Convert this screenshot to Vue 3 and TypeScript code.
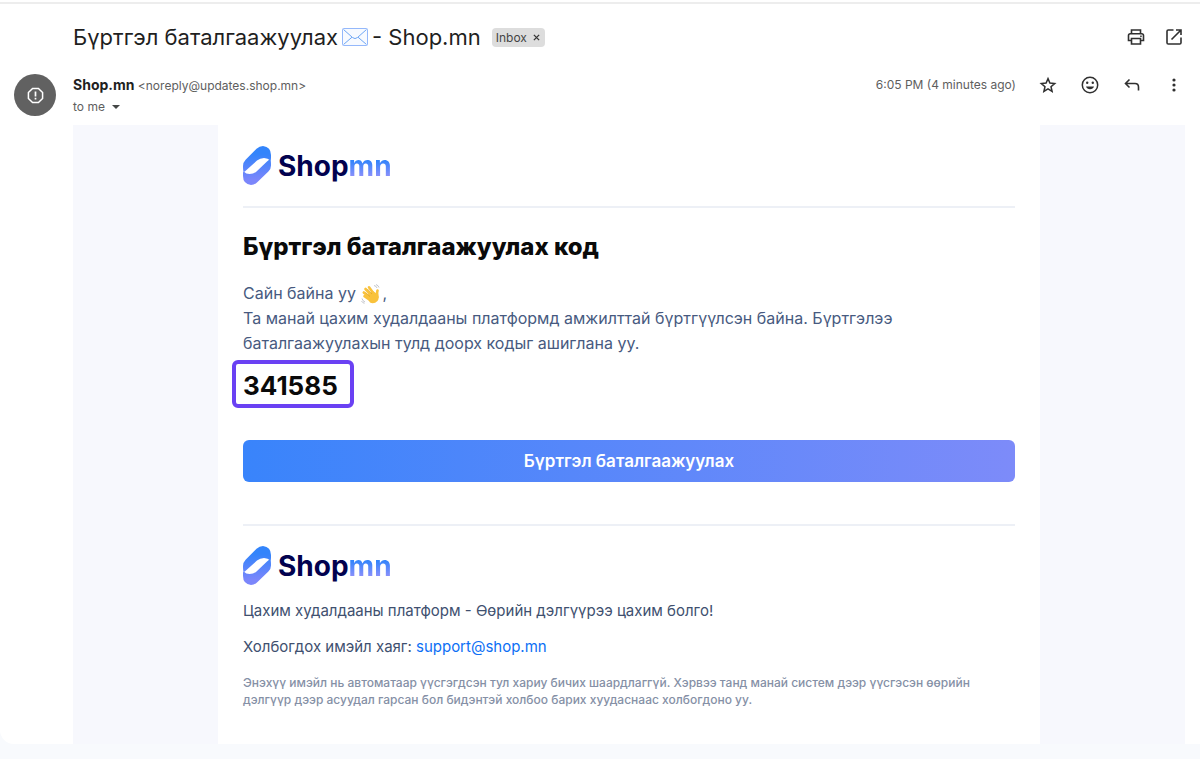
<script setup lang="ts">
const subjectStart = 'Бүртгэл баталгаажуулах'
const subjectEnd = '- Shop.mn'
const code = '341585'
</script>

<template>
  <div class="page">
    <main class="message">
      <header class="subject-row">
        <h1 class="subject">
          <span>{{ subjectStart }}</span>
          <svg class="envelope" viewBox="0 0 26 18" role="img" aria-label="✉️">
            <rect x="0.5" y="0.5" width="25" height="17" rx="1" fill="#f7faff" stroke="#94b8fb" />
            <path d="M1.500 1.500 10.500 9.500Q13 11.700 15.500 9.500L24.500 1.500M1.500 16.500 10 9.200M24.500 16.500 16 9.200" fill="none" stroke="#6ea6f5" />
          </svg>
          <span>{{ subjectEnd }}</span>
        </h1>
        <div class="label">
          <span>Inbox</span>
          <button type="button" class="label-remove" aria-label="Remove label">
            <svg viewBox="0 0 8 8"><path d="M1 1 7 7M7 1 1 7" fill="none" stroke="#333" stroke-width="1.500" /></svg>
          </button>
        </div>
        <div class="subject-tools">
          <button type="button" class="icon" aria-label="Print">
            <svg viewBox="0 0 20 20" fill="none" stroke="#303030" stroke-width="1.600">
              <path d="M5.500 6.500V3h9v3.500M5.500 13.500H2.500V8.500Q2.500 6.700 4.300 6.700H15.700Q17.500 6.700 17.500 8.500V13.500H14.500M5.500 11.500h9V17h-9Z" />
              <path d="M14.200 9.300h1.500" />
            </svg>
          </button>
          <button type="button" class="icon" aria-label="Open in new window">
            <svg viewBox="0 0 20 20" fill="none" stroke="#303030" stroke-width="1.600">
              <path d="M9.500 3H4.300Q3 3 3 4.300V15.700Q3 17 4.300 17H15.700Q17 17 17 15.700V10.500M12 3H17V8M17 3 7.500 12.500" />
            </svg>
          </button>
        </div>
      </header>

      <section class="sender-row">
        <div class="avatar">
          <svg viewBox="0 0 18 18" fill="none" stroke="#fff" stroke-width="1.600">
            <path d="M5.900 1.500h6.200L16.500 5.900v6.200L12.100 16.500H5.900L1.500 12.100V5.900Z" />
            <path d="M9 4.800V10M9 11.400V13.200" stroke-width="1.800" />
          </svg>
        </div>
        <div class="sender">
          <p class="from"><strong>Shop.mn</strong> <span>&lt;noreply@updates.shop.mn&gt;</span></p>
          <button type="button" class="to">
            to me
            <svg viewBox="0 0 8 4"><path d="M0 0h8L4 4Z" fill="#444746" /></svg>
          </button>
        </div>
        <time class="time">6:05 PM (4 minutes ago)</time>
        <div class="actions">
          <button type="button" class="icon" aria-label="Star">
            <svg viewBox="0 0 20 20" fill="none" stroke="#303030" stroke-width="1.500">
              <path d="M10 3.600 11.900 8.100 16.700 8.500 13 11.700 14.100 16.400 10 13.900 5.900 16.400 7 11.700 3.300 8.500 8.100 8.100Z" />
            </svg>
          </button>
          <button type="button" class="icon" aria-label="Add reaction">
            <svg viewBox="0 0 20 20">
              <circle cx="10" cy="10" r="7.700" fill="none" stroke="#303030" stroke-width="1.500" />
              <circle cx="7.200" cy="7.800" r="1.200" fill="#303030" />
              <circle cx="12.800" cy="7.800" r="1.200" fill="#303030" />
              <path d="M6 11.500H14Q13 14.300 10 14.300T6 11.500Z" fill="#303030" />
            </svg>
          </button>
          <button type="button" class="icon" aria-label="Reply">
            <svg viewBox="0 0 20 20" fill="none" stroke="#303030" stroke-width="1.600">
              <path d="M7.500 4.500 3.500 8.500 7.500 12.500M3.500 8.500H13Q16.500 8.500 16.500 12V15.500" />
            </svg>
          </button>
          <button type="button" class="icon" aria-label="More">
            <svg viewBox="0 0 20 20" fill="#303030">
              <circle cx="10" cy="5" r="1.600" /><circle cx="10" cy="10" r="1.600" /><circle cx="10" cy="15" r="1.600" />
            </svg>
          </button>
        </div>
      </section>

      <div class="canvas">
        <article class="mail">
          <div class="brand">
            <svg class="mark" viewBox="0 0 28 39" aria-hidden="true">
              <defs>
                <linearGradient id="mark-fill" gradientUnits="userSpaceOnUse" x1="0" y1="8" x2="0" y2="34">
                  <stop offset="0" stop-color="#3384fb" /><stop offset="1" stop-color="#7b86fb" />
                </linearGradient>
              </defs>
              <g fill="url(#mark-fill)">
                <path d="M.7 26Q0 25 0 20Q0 16.500 2.600 13.800L13.500 2.800Q16.500 0 20 0Q28 1 28 9V12Q28 14 27.300 14.500Q25 12 21 12Q17 12 14 14.500L3.500 24Q1.500 26 .7 26Z" />
                <path d="M27.300 13.500Q28 14 28 19.500Q28 23 25.400 25.600L14.500 36Q11.500 39 8 39Q0 38 0 30V27Q0 25.500 .7 25.500Q3 28 6.500 28Q10.500 28 13.500 25.500L24 15.500Q26 13.500 27.300 13.500Z" />
              </g>
            </svg>
            <span class="wordmark">Shop<span>mn</span></span>
          </div>
          <hr />
          <h2>Бүртгэл баталгаажуулах код</h2>
          <p class="body">
            Сайн байна уу
            <svg class="wave" viewBox="0 0 20 20" role="img" aria-label="👋">
              <g fill="none" stroke="#f9c23c" stroke-width="2.600" stroke-linecap="round">
                <path d="M4.500 5 11 12M8 3.300 13 10M2.800 8.500 9 14M3.500 12.200 9 16M16.500 6.500Q15.500 9 16.500 13" />
              </g>
              <path d="M5 12 12 7 16 10Q19 14 16.500 17Q13 20.500 9 18.500Z" fill="#f9c23c" />
              <path d="M6.500 5 11 10M4.500 8.500 9 12.500" stroke="#d99a20" stroke-width=".6" fill="none" />
              <path d="M13 1.500Q15.500 2 16 4M15 .5Q17.500 1.500 18 3.500M1 14.500Q1.500 17 4 18M.5 17Q1.500 19 3.500 19.300" fill="none" stroke="#c3c5cc" stroke-width="1" />
            </svg>,<br />
            Та манай цахим худалдааны платформд амжилттай бүртгүүлсэн байна. Бүртгэлээ
            баталгаажуулахын тулд доорх кодыг ашиглана уу.
          </p>
          <strong class="code">{{ code }}</strong>
          <a class="cta" href="#">Бүртгэл баталгаажуулах</a>
          <hr />
          <footer>
            <div class="brand">
              <svg class="mark" viewBox="0 0 28 39" aria-hidden="true">
                <g fill="url(#mark-fill)">
                  <path d="M.7 26Q0 25 0 20Q0 16.500 2.600 13.800L13.500 2.800Q16.500 0 20 0Q28 1 28 9V12Q28 14 27.300 14.500Q25 12 21 12Q17 12 14 14.500L3.500 24Q1.500 26 .7 26Z" />
                  <path d="M27.300 13.500Q28 14 28 19.500Q28 23 25.400 25.600L14.500 36Q11.500 39 8 39Q0 38 0 30V27Q0 25.500 .7 25.500Q3 28 6.500 28Q10.500 28 13.500 25.500L24 15.500Q26 13.500 27.300 13.500Z" />
                </g>
              </svg>
              <span class="wordmark">Shop<span>mn</span></span>
            </div>
            <p class="tagline">Цахим худалдааны платформ - Өөрийн дэлгүүрээ цахим болго!</p>
            <p class="contact">Холбогдох имэйл хаяг: <a href="mailto:support@shop.mn">support@shop.mn</a></p>
            <p class="note">
              Энэхүү имэйл нь автоматаар үүсгэгдсэн тул хариу бичих шаардлаггүй. Хэрвээ танд манай систем дээр үүсгэсэн өөрийн<br />
              дэлгүүр дээр асуудал гарсан бол бидэнтэй холбоо барих хуудаснаас холбогдоно уу.
            </p>
          </footer>
        </article>
      </div>
    </main>
  </div>
</template>

<style>
body {
  background: #f8fafd;
}
</style>

<style scoped>
.page {
  font-family: Inter, "Liberation Sans", sans-serif;
  padding-bottom: 15px;
}
.page * {
  box-sizing: border-box;
}
button {
  border: 0;
  padding: 0;
  background: none;
  font: inherit;
  color: inherit;
}
svg {
  display: block;
}
.message {
  background: #fff;
  border-top: 2px solid #fff;
  border-radius: 0 0 0 14px;
}
.subject-row {
  display: flex;
  align-items: center;
  height: 68px;
  padding: 0 16px 0 73px;
  border-top: 2px solid #ededed;
}
.subject {
  display: flex;
  align-items: center;
  gap: 4px;
  margin: 0;
  font-size: 22px;
  line-height: 32px;
  font-weight: 400;
  color: #1f1f1f;
}
.envelope {
  width: 26px;
  height: 18px;
}
.label {
  display: flex;
  align-items: center;
  gap: 6px;
  margin-left: 11px;
  height: 19px;
  padding: 0 5px 0 4px;
  border-radius: 4px;
  background: #ddd;
  color: #444;
  font-size: 12px;
}
.label-remove svg {
  width: 7px;
  height: 7px;
}
.subject-tools {
  display: flex;
  gap: 18px;
  margin-left: auto;
}
.icon svg {
  width: 20px;
  height: 20px;
}
.sender-row {
  display: flex;
  align-items: flex-start;
  height: 55px;
  padding: 4px 16px 0 14px;
}
.avatar {
  display: grid;
  place-items: center;
  width: 42px;
  height: 42px;
  margin-right: 17px;
  border-radius: 50%;
  background: #616161;
}
.avatar svg {
  width: 17px;
  height: 17px;
}
.sender {
  flex: 1;
  color: #5e5e5e;
  font-size: 12px;
  line-height: 21px;
}
.from {
  margin: 0;
}
.from strong {
  color: #1f1f1f;
  font-size: 14px;
  font-weight: 700;
}
.to {
  display: flex;
  align-items: center;
  gap: 7px;
}
.to svg {
  width: 8px;
  height: 4px;
}
.time {
  color: #5e5e5e;
  font-size: 12px;
  line-height: 21px;
}
.actions {
  display: flex;
  gap: 22px;
  margin: 1px 0 0 22px;
}
.canvas {
  margin: 0 15px 0 73px;
  background: #f7f8fd;
}
.mail {
  max-width: 822px;
  margin: 0 auto;
  padding: 20px 25px 36px;
  background: #fff;
}
.brand {
  display: flex;
  align-items: center;
  gap: 7px;
  height: 41px;
}
.mark {
  width: 28px;
  height: 39px;
}
.wordmark {
  font-size: 28px;
  font-weight: 700;
  line-height: 40px;
  color: #02024f;
}
.wordmark span {
  color: transparent;
  background: linear-gradient(#3384fb 35%, #8a90fb 80%);
  background-clip: text;
}
hr {
  height: 2px;
  margin: 20px 0 0;
  border: 0;
  background: #edf0f6;
}
h2 {
  margin: 22px 0 0;
  font-size: 24px;
  line-height: 34px;
  font-weight: 800;
  color: #0a0a0a;
}
.body {
  margin: 17px 0 0;
  font-size: 16px;
  line-height: 25px;
  color: #475a80;
}
.wave {
  display: inline-block;
  width: 20px;
  height: 20px;
  margin: 0 1px;
  vertical-align: -5px;
}
.code {
  display: block;
  width: 122px;
  height: 48px;
  margin: 4px 0 0 -11px;
  padding-left: 7px;
  border: 4px solid #6a41f3;
  border-radius: 6px;
  font-size: 26px;
  line-height: 43px;
  color: #0a0a0a;
}
.cta {
  display: block;
  margin: 32px 0 42px;
  border-radius: 6px;
  background: linear-gradient(90deg, #3984fb, #7d8bf9);
  color: #fff;
  font-size: 17px;
  font-weight: 600;
  line-height: 42px;
  text-align: center;
  text-decoration: none;
}
footer {
  padding-top: 19px;
  color: #40506f;
}
.tagline,
.contact {
  margin: 14px 0 0;
  font-size: 15px;
  line-height: 22px;
}
.contact a {
  color: #0c6ff5;
  text-decoration: none;
}
.note {
  margin: 16px 0 0;
  font-size: 12px;
  font-weight: 500;
  line-height: 17px;
  color: #8590a6;
}
</style>
